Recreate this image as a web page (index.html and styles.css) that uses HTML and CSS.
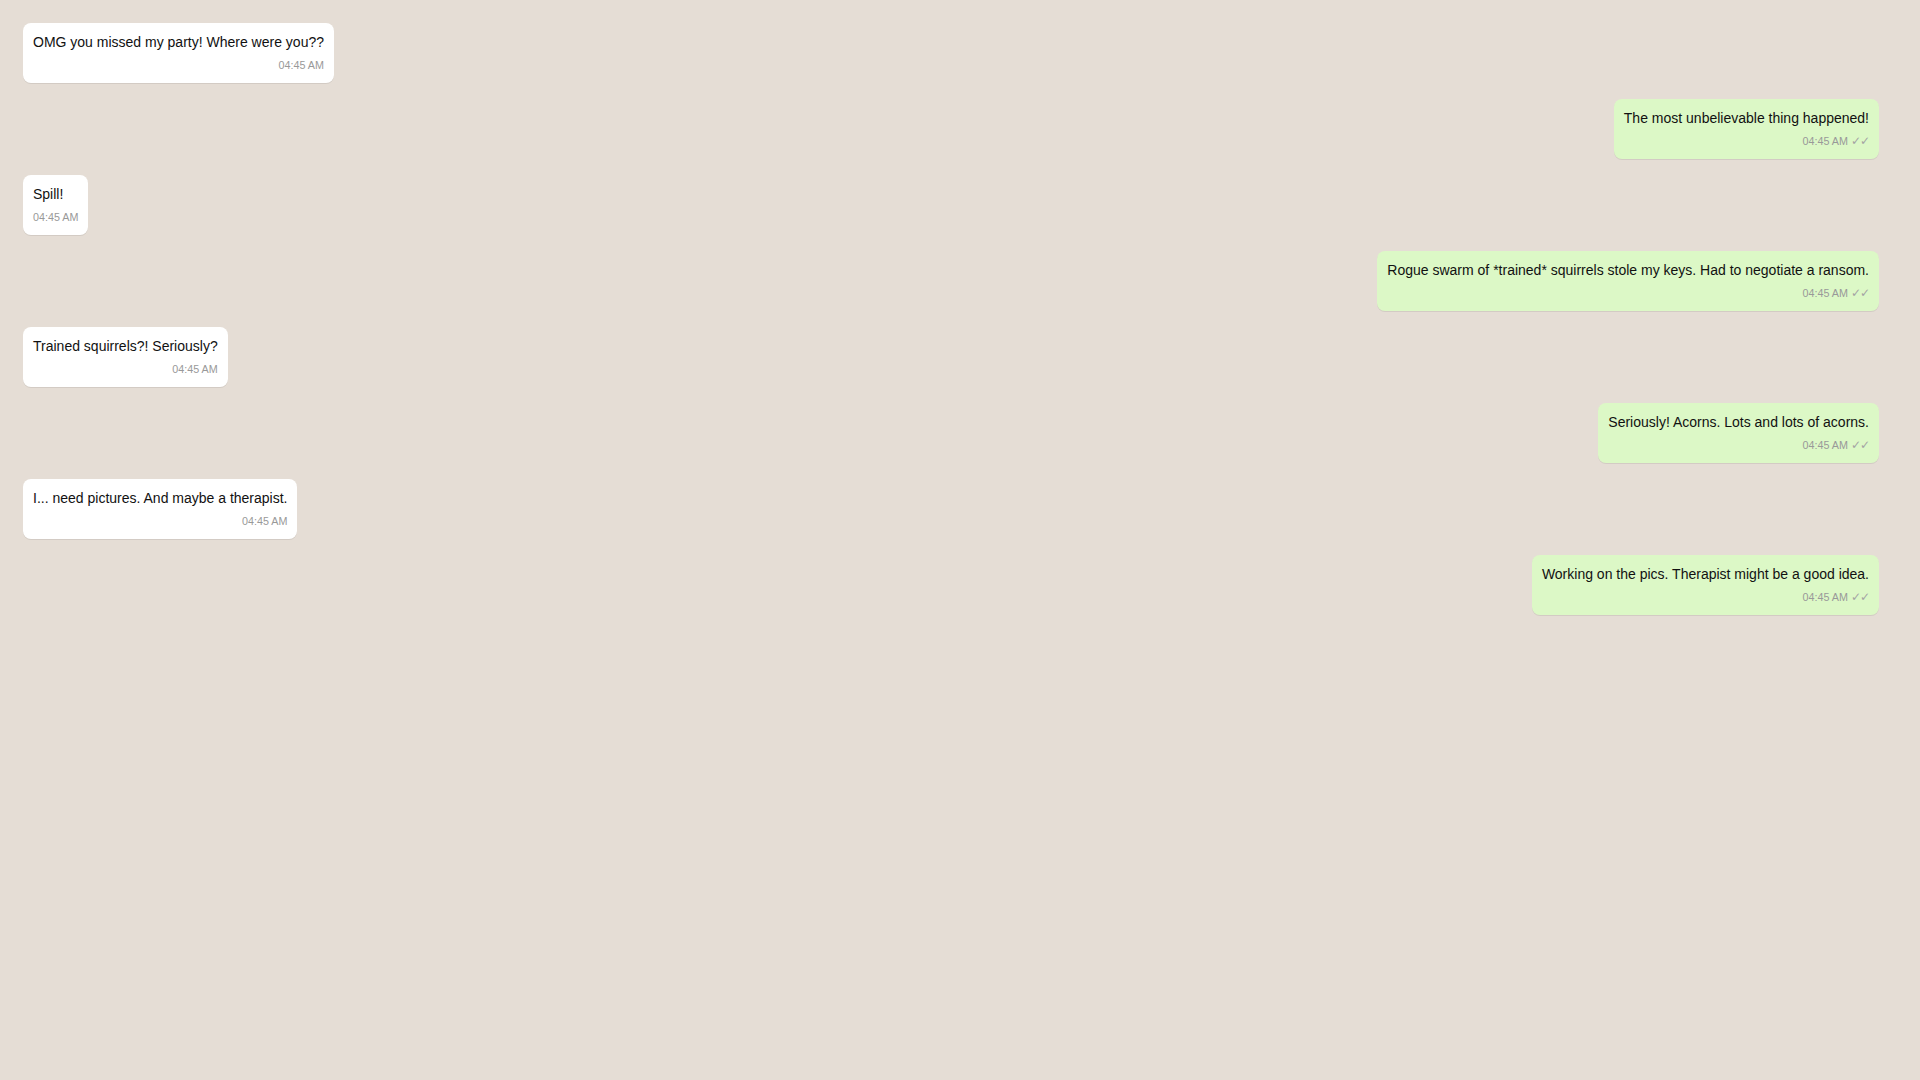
FILE: index.html
```html
<!DOCTYPE html>
<html lang="en">
<head>
<meta charset="utf-8">
<title>Chat</title>
<link rel="stylesheet" href="styles.css">
</head>
<body>
<div class="chat">
  <div class="msg received">
    <div class="text">OMG you missed my party! Where were you??</div>
    <div class="meta">04:45 AM</div>
  </div>
  <div class="msg sent">
    <div class="text">The most unbelievable thing happened!</div>
    <div class="meta">04:45 AM <span class="ticks">✓✓</span></div>
  </div>
  <div class="msg received">
    <div class="text">Spill!</div>
    <div class="meta">04:45 AM</div>
  </div>
  <div class="msg sent">
    <div class="text">Rogue swarm of *trained* squirrels stole my keys. Had to negotiate a ransom.</div>
    <div class="meta">04:45 AM <span class="ticks">✓✓</span></div>
  </div>
  <div class="msg received">
    <div class="text">Trained squirrels?! Seriously?</div>
    <div class="meta">04:45 AM</div>
  </div>
  <div class="msg sent">
    <div class="text">Seriously! Acorns. Lots and lots of acorns.</div>
    <div class="meta">04:45 AM <span class="ticks">✓✓</span></div>
  </div>
  <div class="msg received">
    <div class="text">I... need pictures. And maybe a therapist.</div>
    <div class="meta">04:45 AM</div>
  </div>
  <div class="msg sent">
    <div class="text">Working on the pics. Therapist might be a good idea.</div>
    <div class="meta">04:45 AM <span class="ticks">✓✓</span></div>
  </div>
</div>
</body>
</html>
```
FILE: styles.css
```css
html, body {
  margin: 0;
  padding: 0;
  height: 100%;
}
body {
  background: #e5ddd5;
  font-family: "Liberation Sans", Arial, sans-serif;
  font-size: 14px;
  color: #111;
}
.chat {
  display: flex;
  flex-direction: column;
  gap: 16px;
  padding: 23px 41px 23px 23px;
}
.msg {
  padding: 9px 10px 10px;
  border-radius: 8px;
  max-width: 60%;
  box-shadow: 0 1px 0.5px rgba(0, 0, 0, 0.08);
}
.received {
  align-self: flex-start;
  background: #ffffff;
}
.sent {
  align-self: flex-end;
  background: #dcf8c6;
}
.text {
  line-height: 20px;
}
.meta {
  margin-top: 6px;
  line-height: 15px;
  font-size: 10.75px;
  color: #999999;
  text-align: right;
}
.ticks {
  font-family: "DejaVu Sans", sans-serif;
  font-size: 12px;
  color: #a3a3a3;
  letter-spacing: -1px;
}
```
